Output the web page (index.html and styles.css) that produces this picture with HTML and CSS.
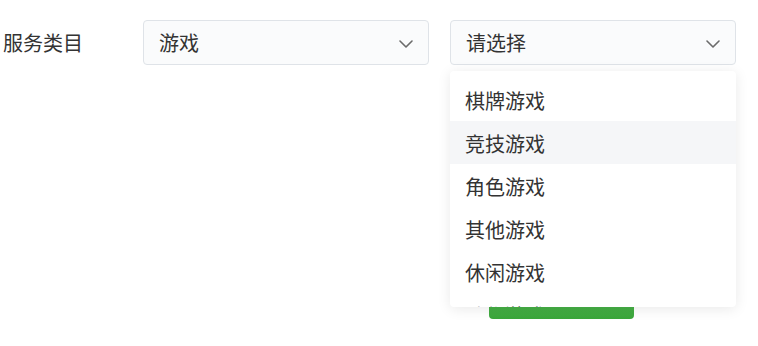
FILE: index.html
```html
<!DOCTYPE html>
<html lang="zh-CN">
<head>
<meta charset="utf-8">
<title>服务类目</title>
<link rel="stylesheet" href="styles.css">
</head>
<body>
<div class="form-row">
  <label class="label">服务类目</label>
  <div class="select">
    <span class="value">游戏</span>
    <svg class="chev" width="14" height="8" viewBox="0 0 14 8"><path d="M1 1 L7 7 L13 1" fill="none" stroke="#6b6b6b" stroke-width="1.6" stroke-linecap="round" stroke-linejoin="round"/></svg>
  </div>
  <div class="select-wrap">
    <div class="select">
      <span class="value">请选择</span>
      <svg class="chev" width="14" height="8" viewBox="0 0 14 8"><path d="M1 1 L7 7 L13 1" fill="none" stroke="#6b6b6b" stroke-width="1.6" stroke-linecap="round" stroke-linejoin="round"/></svg>
    </div>
    <ul class="dropdown">
      <li class="option">棋牌游戏</li>
      <li class="option hover">竞技游戏</li>
      <li class="option">角色游戏</li>
      <li class="option">其他游戏</li>
      <li class="option">休闲游戏</li>
      <li class="option">动作游戏</li>
    </ul>
  </div>
</div>
<div class="actions">
  <button class="btn" aria-label="提交"></button>
</div>
</body>
</html>
```
FILE: styles.css
```css
* { box-sizing: border-box; }
html, body { margin: 0; padding: 0; background: #fff; }
body {
  font-family: "Noto Sans CJK SC", "Noto Sans", sans-serif;
  color: #333;
  width: 758px;
  height: 346px;
  overflow: hidden;
}
.form-row {
  display: flex;
  align-items: center;
  padding: 20px 0 0 3px;
}
.label {
  width: 140px;
  font-size: 20px;
  line-height: 45px;
  color: #333;
}
.select {
  width: 286px;
  height: 45px;
  border: 1px solid #dfe3e8;
  border-radius: 4px;
  background: #fafbfc;
  display: flex;
  align-items: center;
  justify-content: space-between;
  padding: 0 15px;
  font-size: 20px;
  color: #333;
}
.select-wrap {
  position: relative;
  margin-left: 21px;
}
.chev { display: block; margin-top: 2px; }
.dropdown {
  position: absolute;
  top: 51px;
  left: 0;
  width: 286px;
  height: 236px;
  margin: 0;
  padding: 7px 0 0 0;
  list-style: none;
  background: #fff;
  border-radius: 4px;
  box-shadow: 0 2px 14px rgba(0, 0, 0, 0.09);
  overflow: hidden;
  z-index: 10;
}
.option {
  height: 43px;
  line-height: 45px;
  padding: 0 15px;
  font-size: 20px;
  color: #333;
}
.option.hover { background: #f5f6f8; }
.actions {
  margin-top: 214px;
  padding-left: 489px;
}
.btn {
  display: block;
  width: 145px;
  height: 40px;
  border: 0;
  border-radius: 4px;
  background: linear-gradient(#63c463, #3aa63a);
}
```
